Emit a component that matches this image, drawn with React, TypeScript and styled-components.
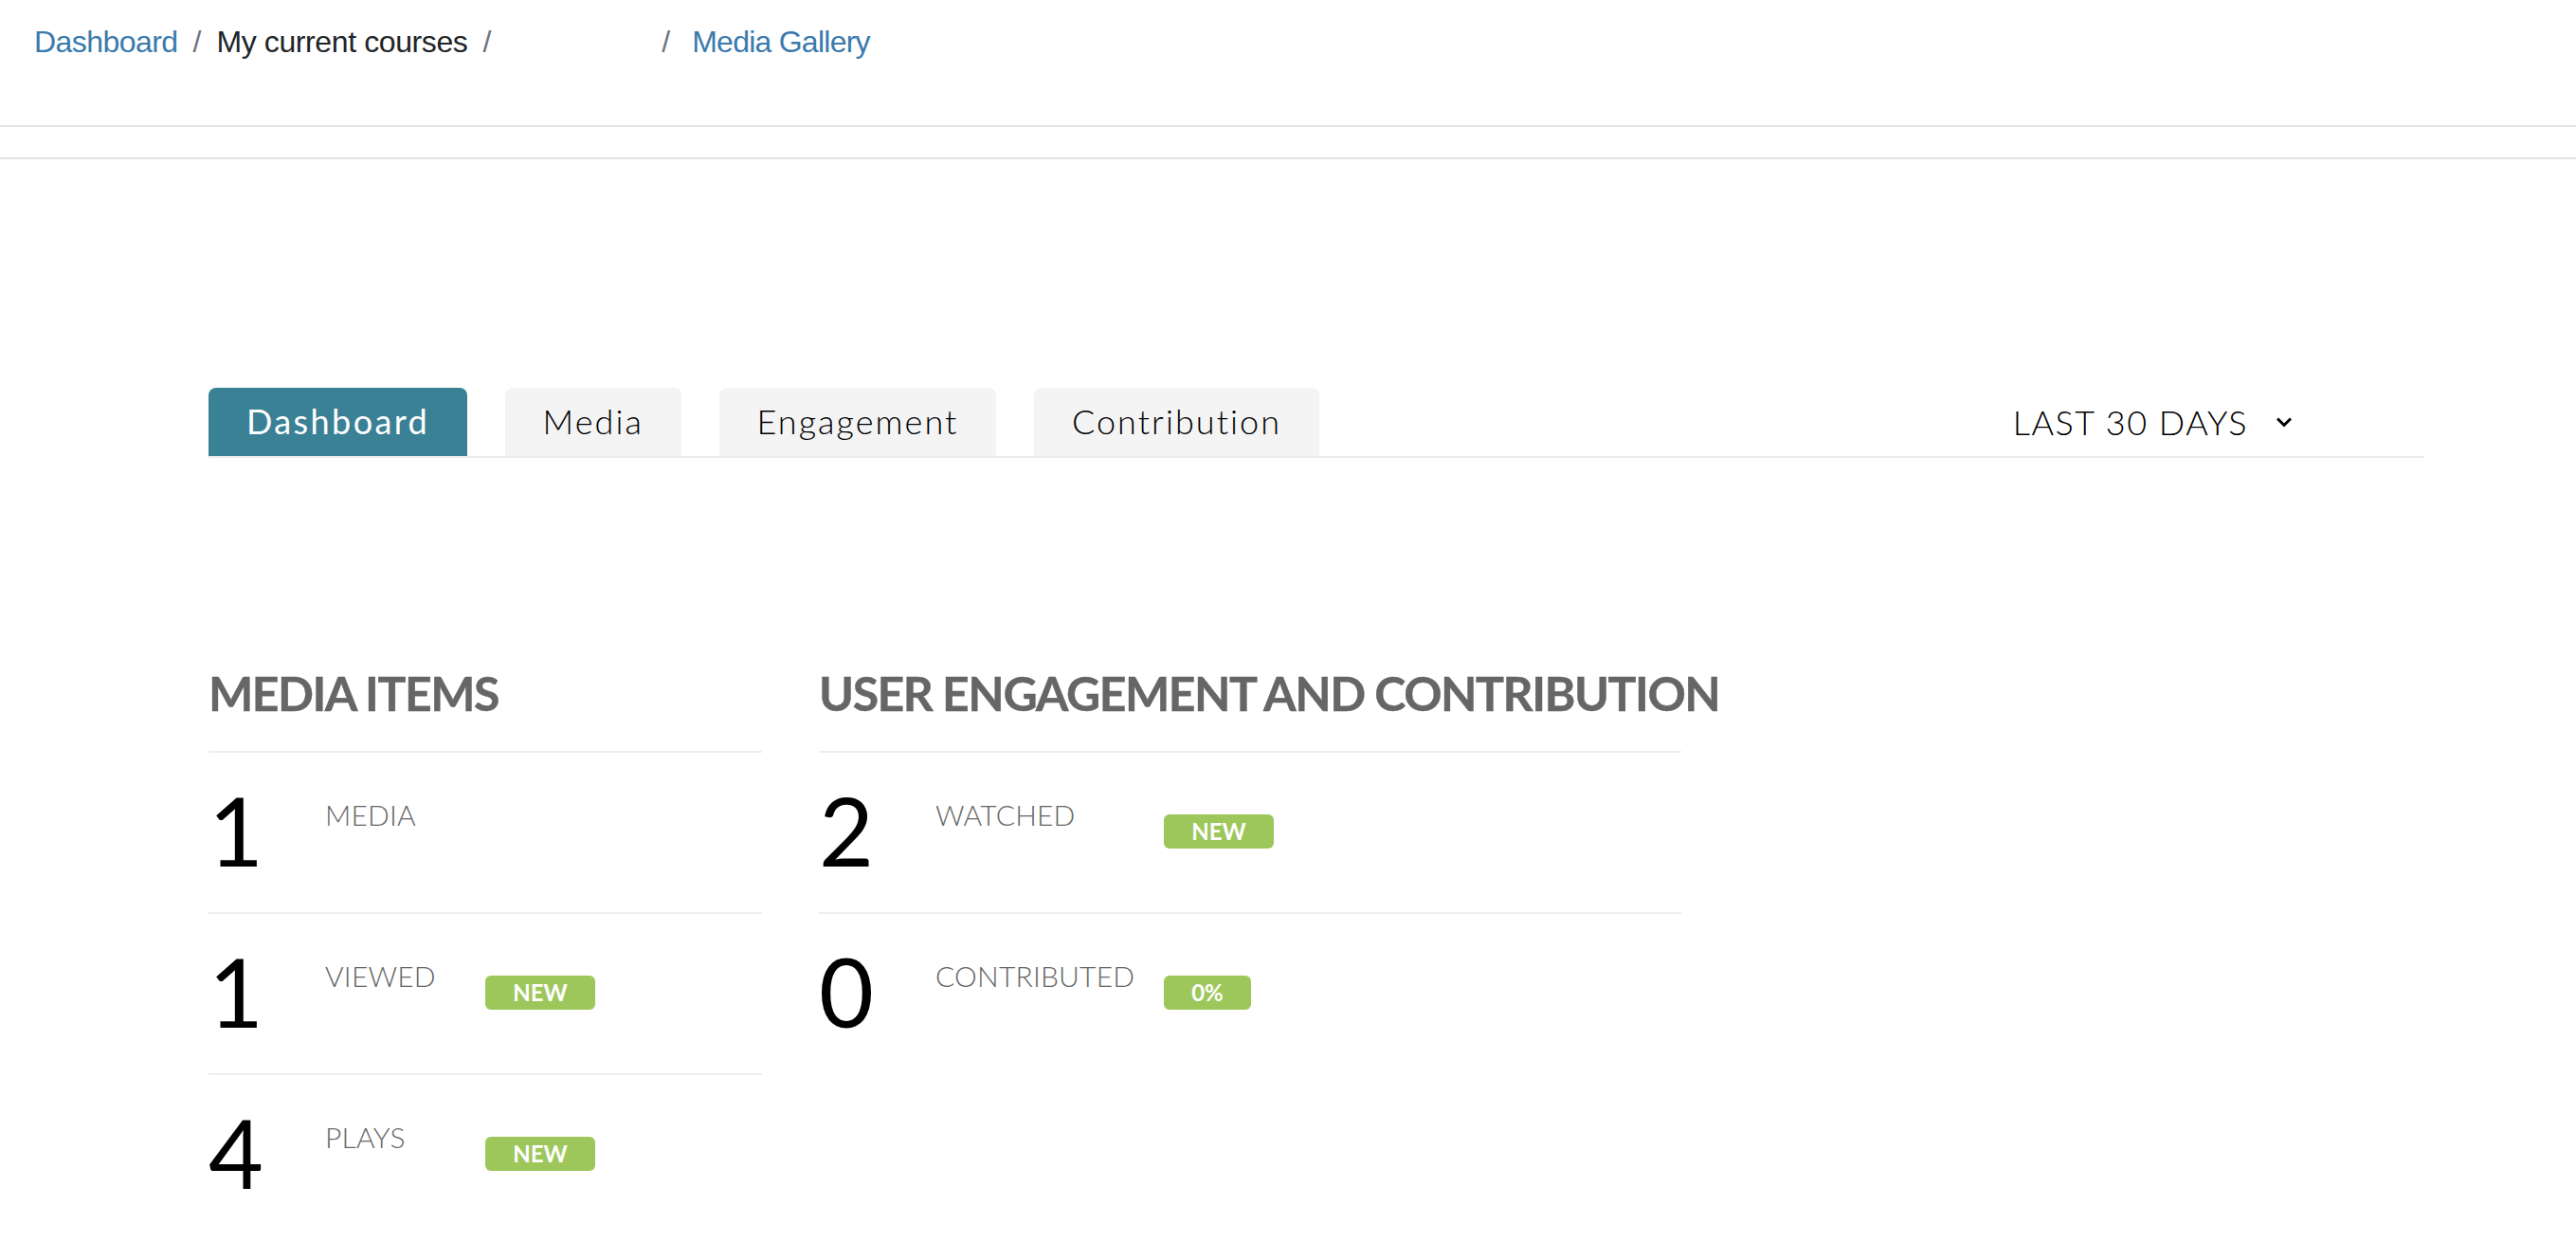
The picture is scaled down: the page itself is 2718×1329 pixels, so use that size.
import React from "react";
import styled, { createGlobalStyle } from "styled-components";

const Global = createGlobalStyle`
  html, body { margin: 0; padding: 0; background: #fff; overflow: hidden; }
  body { font-family: "Lato", "Liberation Sans", sans-serif; }
  * { box-sizing: border-box; }
`;

const TopBar = styled.nav`
  height: 134px;
  border-bottom: 2px solid #e3e3e3;
  display: flex;
  align-items: flex-start;
  padding: 25px 0 0 36px;
  font-family: "Liberation Sans", Arial, sans-serif;
  font-size: 32px;
  line-height: 38px;
`;
const Crumb = styled.span<{ $link?: boolean; $tight?: number }>`
  color: ${(p) => (p.$link ? "#3a7aad" : "#212529")};
  letter-spacing: ${(p) => p.$tight ?? -0.4}px;
`;
const Sep = styled.span<{ $after?: number }>`
  color: #6c757d;
  margin: 0 ${(p) => p.$after ?? 16}px 0 16px;
`;
const Redacted = styled.span`
  display: inline-block;
  width: 148px;
`;
const SubBar = styled.div`
  height: 34px;
  border-bottom: 2px solid #e3e3e3;
`;
const Main = styled.main`
  width: 2338px;
  margin: 241px 0 0 220px;
`;
const TabBar = styled.div`
  display: flex;
  align-items: flex-end;
  height: 74px;
  border-bottom: 2px solid #ebebeb;
`;
const Tab = styled.div<{ $active?: boolean }>`
  height: 72px;
  margin-right: 39.5px;
  padding: 0 40px;
  border-radius: 8px 8px 0 0;
  background: ${(p) => (p.$active ? "#3a8195" : "#f4f4f4")};
  color: ${(p) => (p.$active ? "#fff" : "#000")};
  font-size: 36px;
  font-weight: ${(p) => (p.$active ? 400 : 300)};
  letter-spacing: ${(p) => (p.$active ? 2.4 : 2.05)}px;
  line-height: 71px;
  white-space: nowrap;
`;
const Range = styled.div`
  margin-left: auto;
  margin-right: 140px;
  height: 72px;
  display: flex;
  align-items: center;
  gap: 30px;
  font-size: 36px;
  font-weight: 300;
  letter-spacing: 1.5px;
  color: #000;
`;
const Columns = styled.div`
  display: flex;
  margin-top: 218px;
`;
const Column = styled.section<{ $width: number; $labelWidth: number }>`
  width: ${(p) => p.$width}px;
  margin-right: 60px;
  --label-width: ${(p) => p.$labelWidth}px;
`;
const Heading = styled.h2`
  margin: 0;
  height: 91px;
  font-size: 50px;
  line-height: 60px;
  font-weight: 700;
  color: #666;
  letter-spacing: -1.5px;
  -webkit-text-stroke: 0.4px #666;
  white-space: nowrap;
`;
const Row = styled.div`
  display: grid;
  grid-template-columns: 124px var(--label-width) auto;
  justify-content: start;
  height: 170px;
  border-top: 2px solid #eee;
`;
const Num = styled.div`
  font-size: 100px;
  line-height: 100px;
  padding-top: 31px;
  color: #000;
`;
const Label = styled.div`
  font-size: 30px;
  font-weight: 300;
  line-height: 36px;
  letter-spacing: 0.2px;
  padding-top: 47px;
  margin-left: -1px;
  color: #666;
`;
const Badge = styled.span<{ $wide?: boolean }>`
  margin-top: 65px;
  height: 36px;
  width: ${(p) => (p.$wide ? 116 : 92)}px;
  border-radius: 6px;
  background: #9dc75b;
  color: #fff;
  font-size: 24px;
  font-weight: 700;
  line-height: 36px;
  text-align: center;
`;

const Chevron = () => (
  <svg width="16" height="11" viewBox="0 0 16 11" fill="none" stroke="#000" strokeWidth="3">
    <path d="M1 1.5l7 7 7-7" />
  </svg>
);

type Stat = { value: number; label: string; badge?: string };

const media: Stat[] = [
  { value: 1, label: "MEDIA" },
  { value: 1, label: "VIEWED", badge: "NEW" },
  { value: 4, label: "PLAYS", badge: "NEW" },
];
const users: Stat[] = [
  { value: 2, label: "WATCHED", badge: "NEW" },
  { value: 0, label: "CONTRIBUTED", badge: "0%" },
];

const Stats = ({ items }: { items: Stat[] }) => (
  <>
    {items.map((s) => (
      <Row key={s.label}>
        <Num>{s.value}</Num>
        <Label>{s.label}</Label>
        {s.badge && <Badge $wide={s.badge === "NEW"}>{s.badge}</Badge>}
      </Row>
    ))}
  </>
);

export default function App() {
  return (
    <>
      <Global />
      <TopBar>
        <Crumb $link $tight={-0.55}>Dashboard</Crumb>
        <Sep>/</Sep>
        <Crumb>My current courses</Crumb>
        <Sep>/</Sep>
        <Redacted />
        <Sep $after={23}>/</Sep>
        <Crumb $link $tight={-0.75}>Media Gallery</Crumb>
      </TopBar>
      <SubBar />
      <Main>
        <TabBar>
          <Tab $active>Dashboard</Tab>
          <Tab>Media</Tab>
          <Tab>Engagement</Tab>
          <Tab>Contribution</Tab>
          <Range>
            LAST 30 DAYS
            <Chevron />
          </Range>
        </TabBar>
        <Columns>
          <Column $width={584} $labelWidth={168}>
            <Heading>MEDIA ITEMS</Heading>
            <Stats items={media} />
          </Column>
          <Column $width={910} $labelWidth={240}>
            <Heading>USER ENGAGEMENT AND CONTRIBUTION</Heading>
            <Stats items={users} />
          </Column>
        </Columns>
      </Main>
    </>
  );
}
